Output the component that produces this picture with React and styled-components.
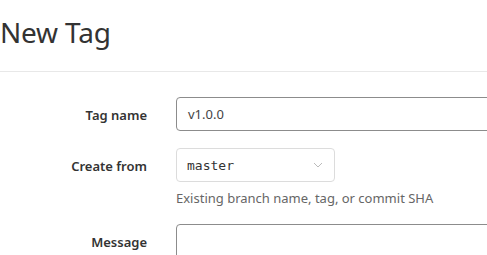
import React from "react";
import styled, { createGlobalStyle } from "styled-components";

const Global = createGlobalStyle`
  html, body { margin: 0; padding: 0; background: #fff; overflow: hidden; }
  body { font-family: "Noto Sans", "Open Sans", sans-serif; color: #333; }
  * { box-sizing: border-box; }
`;

const Page = styled.div`
  width: 487px;
  height: 255px;
  overflow: hidden;
`;

const Header = styled.div`
  padding: 14px 0 0 0;
  height: 72px;
  border-bottom: 1px solid #e8e8e8;
  width: 700px;
`;

const Title = styled.h1`
  margin: 0;
  font-size: 28px;
  font-weight: 400;
  line-height: 36px;
  color: #333;
  letter-spacing: -0.2px;
`;

const Form = styled.div`
  display: flex;
  flex-direction: column;
  gap: 17px;
  padding-top: 25px;
`;

const Row = styled.div`
  display: grid;
  grid-template-columns: 147px 600px;
  column-gap: 29px;
  align-items: start;
`;

const Label = styled.label`
  justify-self: end;
  height: 34px;
  line-height: 32px;
  padding-top: 2px;
  font-size: 13px;
  font-weight: 600;
  color: #333;
`;

const Field = styled.div`
  display: flex;
  flex-direction: column;
`;

const TextInput = styled.div`
  height: 34px;
  border: 1px solid #8c8c8c;
  border-radius: 4px;
  padding: 0 11px;
  display: flex;
  align-items: center;
  font-size: 13px;
  color: #444;
`;

const Select = styled.div`
  width: 159px;
  height: 34px;
  border: 1px solid #dcdcdc;
  border-radius: 4px;
  padding: 0 11px 0 10px;
  display: flex;
  align-items: center;
  justify-content: space-between;
  font-family: "DejaVu Sans Mono", "Liberation Mono", monospace;
  font-size: 13px;
  color: #333;
`;

const Help = styled.div`
  margin-top: 7px;
  font-size: 13px;
  color: #666;
`;

const TextArea = styled.div`
  height: 80px;
  border: 1px solid #8c8c8c;
  border-radius: 4px;
`;

const Chevron = () => (
  <svg width="10" height="6" viewBox="0 0 10 6" fill="none">
    <path d="M1 1l4 4 4-4" stroke="#bbb" strokeWidth="1" />
  </svg>
);

export default function App() {
  return (
    <Page>
      <Global />
      <Header>
        <Title>New Tag</Title>
      </Header>
      <Form>
        <Row>
          <Label>Tag name</Label>
          <Field>
            <TextInput>v1.0.0</TextInput>
          </Field>
        </Row>
        <Row>
          <Label>Create from</Label>
          <Field>
            <Select>
              <span>master</span>
              <Chevron />
            </Select>
            <Help>Existing branch name, tag, or commit SHA</Help>
          </Field>
        </Row>
        <Row>
          <Label>Message</Label>
          <Field>
            <TextArea />
          </Field>
        </Row>
      </Form>
    </Page>
  );
}
